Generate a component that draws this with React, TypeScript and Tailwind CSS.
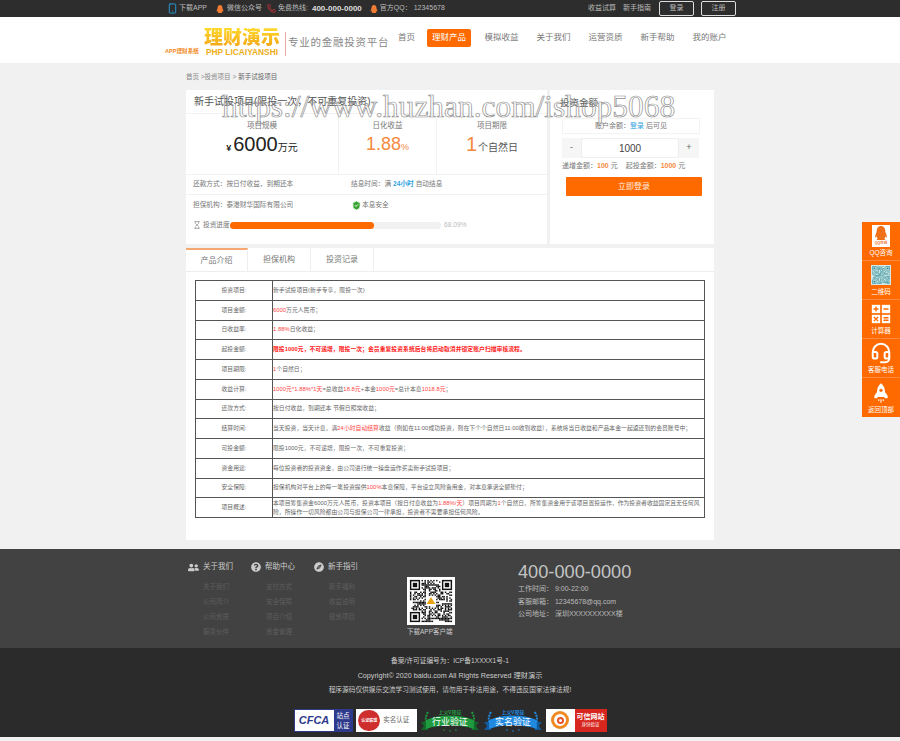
import type { ReactNode } from 'react';
import { Smartphone, Phone, Hourglass, ShieldCheck, Headset } from 'lucide-react';
import { FaQq, FaUserFriends, FaQuestionCircle, FaCompass } from 'react-icons/fa';

const red = (s: string) => <span className="text-[#f44]">{s}</span>;

const rows: { label: string; value: ReactNode }[] = [
  { label: '投资项目:', value: '新手试投项目(新手专享，限投一次)' },
  { label: '项目金额:', value: <>{red('6000')}万元人民币；</> },
  { label: '日收益率:', value: <>{red('1.88%')}日化收益；</> },
  {
    label: '起投金额:',
    value: <strong className="text-[#f22]">限投1000元，不可递增，限投一次；会员重复投资系统后台将启动取消并锁定账户扫描审核流程。</strong>,
  },
  { label: '项目期限:', value: <>{red('1')}个自然日；</> },
  {
    label: '收益计算:',
    value: <>{red('1000元*1.88%*1天')}=总收益{red('18.8元')}+本金{red('1000元')}=总计本息{red('1018.8元')}；</>,
  },
  { label: '还款方式:', value: '按日付收益，到期还本 节假日照常收益；' },
  {
    label: '结算时间:',
    value: <>当天投资，当天计息，满{red('24小时自动结算')}收益（例如在11:00成功投资，则在下个个自然日11:00收到收益），系统将当日收益和产品本金一起返还到的会员账号中；</>,
  },
  { label: '可投金额:', value: '限投1000元，不可递增，限投一次，不可重复投资；' },
  { label: '资金用途:', value: '每位投资者的投资资金，由公司进行统一操盘运作买卖新手试投项目；' },
  { label: '安全保障:', value: <>担保机构对平台上的每一笔投资提供{red('100%')}本息保障，平台设立风险备用金，对本息承诺全额垫付；</> },
  {
    label: '项目概述:',
    value: <>本项目筹集资金6000万元人民币，投资本项目（按日付息收益为{red('1.88%/天')}）项目周期为{red('1')}个自然日，所筹集资金用于该项目置投运作，作为投资者收益固定且无任何风险，所操作一切风险都由公司与担保公司一律承担，投资者不需要承担任何风险。</>,
  },
];

const footerCols = [
  { title: '关于我们', icon: <FaUserFriends size={11} />, links: ['关于我们', '公司简介', '公司资质', '服务伙伴'] },
  { title: '帮助中心', icon: <FaQuestionCircle size={10} />, links: ['支付方式', '安全保障', '项目介绍', '资金管理'] },
  { title: '新手指引', icon: <FaCompass size={10} />, links: ['新手福利', '收益说明', '投资项目', ''] },
];

// fake qr pattern, seeded so it stays the same
function Qr({ size, dark, light, logo }: { size: number; dark: string; light: string; logo?: boolean }) {
  const n = 29;
  const cells: ReactNode[] = [];
  const inFinder = (x: number, y: number) => (x < 8 && y < 8) || (x > n - 9 && y < 8) || (x < 8 && y > n - 9);
  for (let y = 0; y < n; y++) {
    for (let x = 0; x < n; x++) {
      if (inFinder(x, y)) continue;
      const h = (x * 73 + y * 151 + x * y * 17 + ((x ^ y) * 29)) % 97;
      if (h % 2 === 0) cells.push(<rect key={`${x}-${y}`} x={x} y={y} width="1" height="1" fill={dark} />);
    }
  }
  const finder = (x: number, y: number) => (
    <g key={`f${x}${y}`}>
      <rect x={x} y={y} width="7" height="7" fill={dark} />
      <rect x={x + 1} y={y + 1} width="5" height="5" fill={light} />
      <rect x={x + 2} y={y + 2} width="3" height="3" fill={dark} />
    </g>
  );
  return (
    <svg width={size} height={size} viewBox="-2 -2 33 33" aria-hidden="true">
      <rect x="-2" y="-2" width="33" height="33" fill={light} />
      {cells}
      {finder(0, 0)}
      {finder(n - 7, 0)}
      {finder(0, n - 7)}
      {logo && (
        <>
          <rect x="11" y="11" width="7" height="7" fill="#fff" />
          <path d="M14.5 11.8l3 4.8h-6z" fill="#e8a317" />
        </>
      )}
    </svg>
  );
}

function Ribbon({ color, dark, title }: { color: string; dark: string; title: string }) {
  return (
    <svg width="60" height="25" viewBox="0 0 60 25" aria-hidden="true">
      <text x="30" y="6" textAnchor="middle" fontSize="5" fontWeight="700" fill={color} fontFamily="Noto Sans CJK SC">上义V现征</text>
      <path d="M8 4C5 9 5 14 8 18M52 4c3 5 3 10 0 14" fill="none" stroke={color} strokeWidth="2" strokeDasharray="2 1" />
      <path d="M1 14l7 0 0 8-7 0 3-4zM59 14l-7 0 0 8 7 0-3-4z" fill={dark} />
      <path d="M6 12C20 6 40 6 54 12v9C40 16 20 16 6 21z" fill={color} />
      <text x="30" y="17" textAnchor="middle" fontSize="9" fill="#fff" fontFamily="Noto Sans CJK SC">{title}</text>
      <circle cx="24" cy="22" r="0.8" fill={color} />
      <circle cx="30" cy="23" r="0.8" fill={color} />
      <circle cx="36" cy="22" r="0.8" fill={color} />
    </svg>
  );
}

function SideItem({ icon, label }: { icon: ReactNode; label: string }) {
  return (
    <div className="flex h-[39px] flex-col items-center justify-between border-b border-[#ff8a3d] pt-[2px] pb-[3px] last:border-b-0">
      <div className="flex h-[25px] items-center text-white">{icon}</div>
      <span className="text-[6.5px] leading-[9px] text-white">{label}</span>
    </div>
  );
}

export default function App() {
  return (
    <div
      className="relative min-h-[741px] overflow-hidden bg-[#f1f1f1] text-[#777]"
      style={{ fontFamily: '"Liberation Sans", "Noto Sans CJK SC", sans-serif' }}
    >
      {/* top bar */}
      <div className="h-[17px] bg-[#2d2d2d] text-[7px] text-[#bbb]">
        <div className="mx-auto flex h-full w-[572px] items-center justify-between pl-[3px]">
          <div className="flex items-center">
            <Smartphone size={11} className="text-[#2a9fe0]" />
            <span className="ml-[1px]">下载APP</span>
            <FaQq size={8} className="ml-[9px] text-[#f07b32]" />
            <span className="ml-[3px]">微信公众号</span>
            <Phone size={9} className="ml-[5px] text-[#d9363e]" />
            <span className="ml-[2px]">免费热线:</span>
            <strong className="ml-[4px] text-[8px] text-[#ddd]">400-000-0000</strong>
            <FaQq size={8} className="ml-[8px] text-[#f07b32]" />
            <span className="ml-[2px]">官方QQ：</span>
            <span className="ml-[2px]">12345678</span>
          </div>
          <div className="flex items-center">
            <span>收益试算</span>
            <span className="ml-[7px]">新手指南</span>
            <button className="ml-[8px] h-[15px] w-[35px] rounded-[2px] border border-[#ddd] text-[7px]">登录</button>
            <button className="ml-[7px] h-[15px] w-[35px] rounded-[2px] border border-[#ddd] text-[7px]">注册</button>
          </div>
        </div>
      </div>

      {/* header */}
      <div className="h-[46px] bg-white">
        <div className="mx-auto flex h-full w-[570px] items-center">
          <div className="mt-[3px] flex h-[28px] w-[120px] items-end">
            <span className="mb-[1px] w-[39px] text-[5.6px] leading-[7px] font-bold whitespace-nowrap text-[#f08a24]">APP理财系统</span>
            <div className="flex w-[76px] flex-col items-center">
              <span className="bg-gradient-to-b from-[#ffd92e] to-[#f2a20f] bg-clip-text text-[19px] leading-[20px] font-black whitespace-nowrap text-transparent">理财演示</span>
              <span className="text-[8.4px] leading-[8px] font-bold whitespace-nowrap text-[#eeae18]">PHP LICAIYANSHI</span>
            </div>
          </div>
          <div className="mt-[8px] h-[24px] w-px bg-[#e9a8a0]" />
          <span className="mt-[6px] ml-[2px] w-[108px] text-[10.5px] tracking-[0.75px] whitespace-nowrap text-[#888]">专业的金融投资平台</span>
          <nav className="-mt-[5px] flex items-center text-[8.5px] text-[#777]">
            <span className="w-[21px] text-center">首页</span>
            <span className="ml-[10px] flex h-[18px] w-[44px] items-center justify-center rounded-[2px] bg-[#ff6a00] text-white">理财产品</span>
            <span className="ml-[13px] w-[35px] text-center">模拟收益</span>
            <span className="ml-[17px] w-[35px] text-center">关于我们</span>
            <span className="ml-[17px] w-[35px] text-center">运营资质</span>
            <span className="ml-[17px] w-[35px] text-center">新手帮助</span>
            <span className="ml-[17px] w-[35px] text-center">我的账户</span>
          </nav>
        </div>
      </div>

      <div className="mx-auto w-[528px]">
        {/* breadcrumb */}
        <div className="flex h-[27px] items-center text-[6.5px] text-[#888]">
          首页 &gt;投资项目 &gt; <span className="ml-[2px] text-[#666]">新手试投项目</span>
        </div>

        <div className="flex h-[154px] gap-[3px]">
          {/* project card */}
          <div className="w-[361px] bg-white">
            <div className="flex h-[24px] items-center border-b border-[#f2f2f2] pl-[8px] text-[10px] text-[#555]">
              新手试投项目(限投一次，不可重复投资)
            </div>
            <div className="flex h-[61px] border-b border-[#f2f2f2]">
              <div className="w-[153px] border-r border-[#f2f2f2] pt-[7px] text-center">
                <div className="text-[7.5px] leading-[10px]">项目规模</div>
                <div className="mt-[1px] flex items-baseline justify-center text-[#222]">
                  <span className="text-[9px] font-bold">¥</span>
                  <span className="ml-[2px] text-[20px] leading-[24px]">6000</span>
                  <span className="text-[10px]">万元</span>
                </div>
              </div>
              <div className="w-[98px] border-r border-[#f2f2f2] pt-[7px] text-center">
                <div className="text-[7.5px] leading-[10px]">日化收益</div>
                <div className="mt-[1px] flex items-baseline justify-center text-[#f58a42]">
                  <span className="text-[18px] leading-[24px]">1.88</span>
                  <span className="text-[9px]">%</span>
                </div>
              </div>
              <div className="flex-1 pt-[7px] text-center">
                <div className="text-[7.5px] leading-[10px]">项目期限</div>
                <div className="mt-[1px] flex items-baseline justify-center text-[#555]">
                  <span className="text-[20px] leading-[24px] text-[#f58a42]">1</span>
                  <span className="ml-[1px] text-[10px]">个自然日</span>
                </div>
              </div>
            </div>
            <div className="flex h-[20px] items-center border-b border-[#f2f2f2] pl-[7px] text-[6.7px]">
              <span className="w-[158px]">还款方式：按日付收益，到期还本</span>
              <span>结息时间：满 <strong className="text-[#2f9fe0]">24小时</strong> 自动结息</span>
            </div>
            <div className="flex h-[20px] items-center pl-[7px] text-[6.7px]">
              <span className="w-[158px]">担保机构：泰港财华国际有限公司</span>
              <ShieldCheck size={11} className="fill-[#3aa535] text-white" />
              <span>本息安全</span>
            </div>
            <div className="mt-[5px] flex items-center pl-[7px] text-[6.7px]">
              <Hourglass size={8} className="text-[#888]" />
              <span className="ml-[2px] w-[27px] whitespace-nowrap">投资进度</span>
              <div className="h-[7px] w-[211px] rounded-full bg-[#f1f1f1]">
                <div className="h-full rounded-full bg-[#ff6a00]" style={{ width: '68.09%' }} />
              </div>
              <span className="ml-[3px] text-[#bbb]">68.09%</span>
            </div>
          </div>

          {/* invest card */}
          <div className="w-[164px] bg-white px-[12px]">
            <div className="-ml-[2px] flex h-[26px] items-center text-[9.5px] text-[#555]">投资金额</div>
            <div className="mt-[2px] flex h-[16px] w-[138px] items-center justify-center border border-[#f3f3f3] text-[7px]">
              账户余额：<span className="text-[#2f9fe0]">登录</span>&nbsp;后可见
            </div>
            <div className="mt-[4px] flex h-[20px] w-[137px] bg-[#f6f6f6] text-[#666]">
              <span className="flex w-[19px] items-center justify-center text-[9px]">-</span>
              <span className="flex w-[98px] items-center justify-center rounded-[2px] border border-[#eee] bg-white text-[10px] text-[#444]">1000</span>
              <span className="flex w-[20px] items-center justify-center text-[9px]">+</span>
            </div>
            <div className="mt-[4px] flex h-[9px] items-center text-[7px] whitespace-nowrap">
              递增金额：<strong className="text-[#f58a42]">100</strong>&nbsp;元
              <span className="ml-[8px]">起投金额：</span><strong className="text-[#f58a42]">1000</strong>&nbsp;元
            </div>
            <button className="mt-[6px] ml-[4px] flex h-[19px] w-[136px] items-center justify-center rounded-[1px] bg-[#ff6a00] text-[8px] text-white/90">
              立即登录
            </button>
          </div>
        </div>

        {/* details */}
        <div className="mt-[4px] h-[292px] bg-white">
          <div className="flex h-[24px] border-b border-[#eee] text-[8px] text-[#777]">
            <span className="flex w-[62px] items-center justify-center border-t-2 border-r border-t-[#f5a871] border-r-[#eee]">产品介绍</span>
            <span className="flex w-[63px] items-center justify-center border-r border-[#eee]">担保机构</span>
            <span className="flex w-[63px] items-center justify-center border-r border-[#eee]">投资记录</span>
          </div>
          <div className="px-[9px] pt-[8px]">
            <table className="w-[510px] table-fixed border-collapse text-[5.8px] leading-[8.8px] tracking-[0.05px] text-[#666]">
              <tbody>
                {rows.map((r) => (
                  <tr key={r.label} className="h-[19.75px]">
                    <td className="w-[77px] border border-[#555] text-center">{r.label}</td>
                    <td className="border border-[#555] pr-[2px] align-middle">{r.value}</td>
                  </tr>
                ))}
              </tbody>
            </table>
          </div>
        </div>
      </div>

      {/* footer */}
      <div className="mt-[9px] h-[99px] bg-[#424242]">
        <div className="mx-auto flex w-[528px] pl-[2px]">
          <div className="mt-[11px] flex w-[219px] text-[#ccc]">
            {footerCols.map((c) => (
              <div key={c.title} className="w-[63px]">
                <div className="flex h-[14px] items-center gap-[4px] text-[7.5px] whitespace-nowrap">
                  {c.icon}
                  <span>{c.title}</span>
                </div>
                <div className="mt-[5px] pl-[15px] text-[6.5px] leading-[15px] text-[#5e5e5e]">
                  {c.links.map((l, i) => (
                    <div key={i} className="h-[15px] whitespace-nowrap">{l}</div>
                  ))}
                </div>
              </div>
            ))}
          </div>
          <div className="flex w-[111px] flex-col items-start pt-[28px]">
            <Qr size={48} dark="#111" light="#fff" logo />
            <span className="mt-[2px] text-[6.5px] leading-[9px] text-[#ccc]">下载APP客户端</span>
          </div>
          <div className="pt-[13px] text-[#bbb]">
            <div className="text-[18.2px] leading-[20px] text-[#c4c4c4]">400-000-0000</div>
            <div className="mt-[1px] text-[7px] leading-[12.5px] whitespace-nowrap">
              <div>工作时间： 9:00-22:00</div>
              <div>客服邮箱： 12345678@qq.com</div>
              <div>公司地址： 深圳XXXXXXXXXX楼</div>
            </div>
          </div>
        </div>
      </div>

      <div className="flex h-[89px] flex-col items-center bg-[#2b2b2b] pt-[6px] text-[6.7px] leading-[14.5px] text-[#ccc]">
        <div>备案/许可证编号为：ICP备1XXXX1号-1</div>
        <div className="text-[7.2px]">Copyright© 2020 baidu.com All Rights Reserved 理财演示</div>
        <div>程序源码仅供娱乐交流学习测试使用，请勿用于非法用途，不得违反国家法律法规!</div>
        <div className="mt-[10px] flex h-[25px] w-[313px] items-center gap-[3px]">
          <div className="flex h-[23px] w-[60px] border border-[#2e3a8c] bg-white">
            <span className="flex w-[39px] items-center justify-center text-[11px] font-black text-[#2e3a8c] italic">CFCA</span>
            <span className="flex-1 bg-[#2e3a8c] pt-[1px] text-center text-[6.5px] leading-[10px] text-white">站点<br />认证</span>
          </div>
          <div className="flex h-[23px] w-[61px] items-center bg-white pr-[1px]">
            <span className="ml-[2px] flex h-[21px] w-[22px] shrink-0 items-center justify-center rounded-full bg-[#cf2e2e] text-[4px] leading-[5px] font-bold text-white">认证联盟</span>
            <span className="ml-[3px] text-[6.5px] whitespace-nowrap text-[#666]">实名认证</span>
          </div>
          <Ribbon color="#1f9a3e" dark="#12692a" title="行业验证" />
          <Ribbon color="#1f8ae0" dark="#12589a" title="实名验证" />
          <div className="flex h-[23px] w-[61px] bg-[#d7261e]">
            <span className="flex w-[29px] items-center justify-center bg-white">
              <span className="flex h-[18px] w-[18px] items-center justify-center rounded-full border-[3px] border-[#f08a24]">
                <span className="h-[7px] w-[7px] rounded-full border-2 border-[#e8552a]" />
              </span>
            </span>
            <span className="flex flex-1 flex-col items-center justify-center text-white">
              <span className="text-[7px] leading-[10px] font-bold whitespace-nowrap">可信网站</span>
              <span className="text-[4.5px] leading-[6px] whitespace-nowrap">身份验证</span>
            </span>
          </div>
        </div>
      </div>

      {/* floating side bar */}
      <div className="absolute top-[222px] right-0 w-[38px] bg-[#ff6a00]">
        <SideItem
          label="QQ咨询"
          icon={
            <span className="flex h-[22px] w-[18px] flex-col items-center justify-between bg-white pt-[1px] text-[#f0701a]">
              <FaQq size={14} />
              <span className="mb-[1px] text-[3.5px] leading-[5px] font-bold whitespace-nowrap">QQ在线</span>
            </span>
          }
        />
        <SideItem label="二维码" icon={<Qr size={20} dark="#2f8f9f" light="#d7e8e4" />} />
        <SideItem
          label="计算器"
          icon={
            <svg width="20" height="20" viewBox="0 0 24 24" aria-hidden="true">
              <rect x="1" y="1" width="10" height="10" fill="#fff" />
              <rect x="13" y="1" width="10" height="10" fill="#fff" />
              <rect x="1" y="13" width="10" height="10" fill="#fff" />
              <rect x="13" y="13" width="10" height="10" fill="#fff" />
              <path d="M6 3v6M3 6h6M15 6h6M3.5 15.5l5 5M8.5 15.5l-5 5M15 16.5h6M15 19.5h6" stroke="#ff6a00" strokeWidth="1.6" />
            </svg>
          }
        />
        <SideItem label="客服电话" icon={<Headset size={22} strokeWidth={2.2} />} />
        <SideItem
          label="返回顶部"
          icon={
            <svg width="16" height="22" viewBox="0 0 18 24" aria-hidden="true">
              <path d="M9 1c3.500 3 4.500 6.500 4.500 10l3 4v3h-3l-1-1.500h-7l-1 1.500h-3v-3l3-4C4.500 7.500 5.500 4 9 1z" fill="#fff" />
              <circle cx="9" cy="9" r="1.800" fill="#ff6a00" />
              <path d="M9 19v4M6.500 19v2M11.500 19v2" stroke="#fff" strokeWidth="1.200" />
            </svg>
          }
        />
      </div>

      {/* site watermark */}
      <div className="pointer-events-none absolute top-[89px] left-[222px] text-[31.4px] leading-[36px] whitespace-nowrap text-transparent [-webkit-text-stroke:0.7px_#8f8f8f]" style={{ fontFamily: '"Liberation Serif", serif' }}>
        https://www.huzhan.com/ishop5068
      </div>
    </div>
  );
}
